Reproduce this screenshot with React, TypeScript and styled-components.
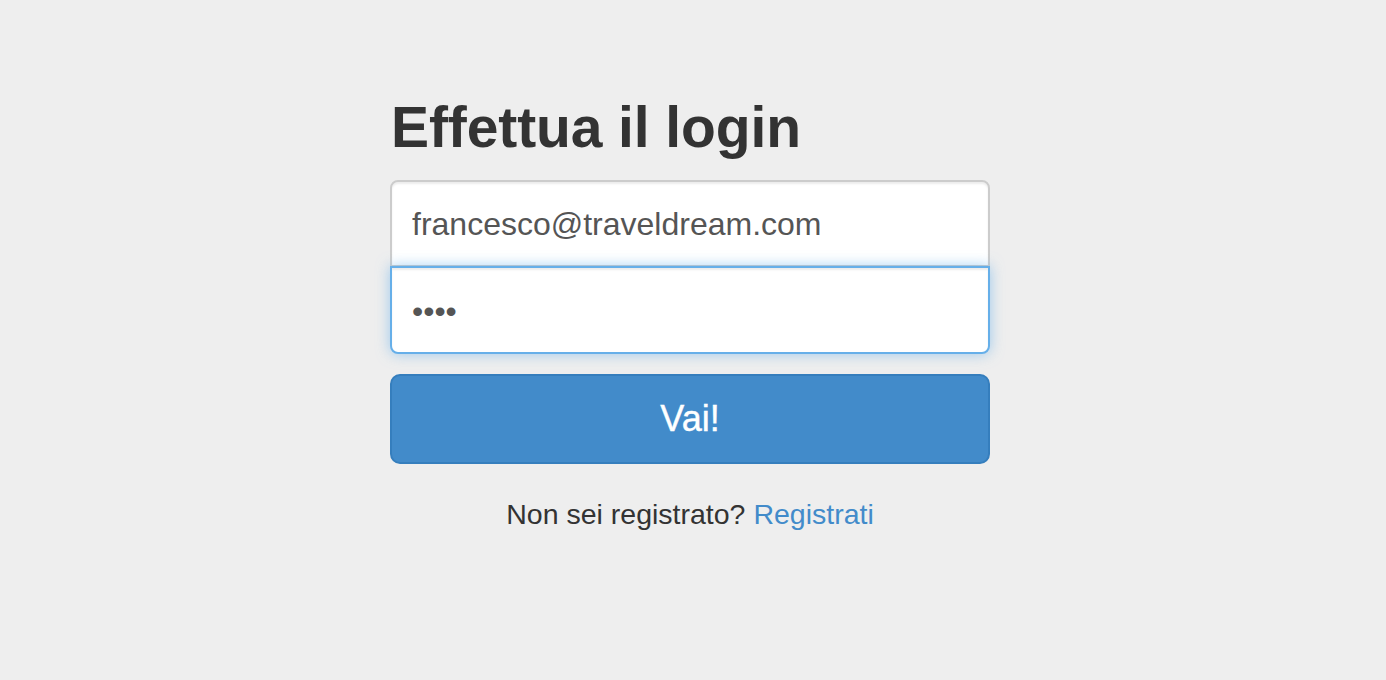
import React from "react";
import styled, { createGlobalStyle } from "styled-components";

const GlobalStyle = createGlobalStyle`
  html, body {
    margin: 0;
    padding: 0;
    background: #eeeeee;
    font-family: "Liberation Sans", Arial, Helvetica, sans-serif;
    color: #333333;
  }
  * { box-sizing: border-box; }
`;

const Page = styled.div`
  display: flex;
  justify-content: center;
  padding: 96px 6px 0 0;
  min-height: 680px;
`;

const Form = styled.form`
  width: 600px;
  display: flex;
  flex-direction: column;
`;

const Heading = styled.h2`
  margin: 0 0 21px 1px;
  font-size: 57px;
  line-height: 1.1;
  font-weight: 700;
  color: #333333;
  letter-spacing: -0.1px;
`;

const Input = styled.input<{ $position: "top" | "bottom"; $focused?: boolean }>`
  display: block;
  width: 100%;
  height: ${(p) => (p.$position === "top" ? "87px" : "88px")};
  margin: 0;
  padding: 3px 20px 0;
  font-family: "Liberation Sans", Arial, Helvetica, sans-serif;
  font-size: 32px;
  color: #555555;
  background: #ffffff;
  border: 2px solid ${(p) => (p.$focused ? "#66afe9" : "#cccccc")};
  border-radius: ${(p) => (p.$position === "top" ? "8px 8px 0 0" : "0 0 8px 8px")};
  box-shadow: ${(p) =>
    p.$focused
      ? "inset 0 2px 2px rgba(0,0,0,0.075), 0 0 14px rgba(102,175,233,0.6)"
      : "inset 0 2px 2px rgba(0,0,0,0.075)"};
  position: relative;
  z-index: ${(p) => (p.$focused ? 2 : 1)};
  margin-top: ${(p) => (p.$position === "bottom" ? "-1px" : "0")};
  outline: none;
`;

const SubmitButton = styled.button`
  margin-top: 20px;
  width: 100%;
  height: 90px;
  background: #428bca;
  border: 2px solid #357ebd;
  border-radius: 10px;
  color: #ffffff;
  font-family: "Liberation Sans", Arial, Helvetica, sans-serif;
  font-size: 36px;
  padding-top: 2px;
  cursor: pointer;
  -webkit-text-stroke: 0.4px #ffffff;
`;

const Footer = styled.p`
  margin: 31px 0 0;
  text-align: center;
  font-size: 28.5px;
  line-height: 1.4;
  color: #333333;
`;

const Link = styled.a`
  color: #428bca;
  text-decoration: none;
`;

export default function App() {
  return (
    <>
      <GlobalStyle />
      <Page>
        <Form onSubmit={(e) => e.preventDefault()}>
          <Heading>Effettua il login</Heading>
          <Input $position="top" type="email" defaultValue="francesco@traveldream.com" />
          <Input $position="bottom" $focused type="password" defaultValue="1234" />
          <SubmitButton type="submit">Vai!</SubmitButton>
          <Footer>
            Non sei registrato? <Link href="#">Registrati</Link>
          </Footer>
        </Form>
      </Page>
    </>
  );
}
